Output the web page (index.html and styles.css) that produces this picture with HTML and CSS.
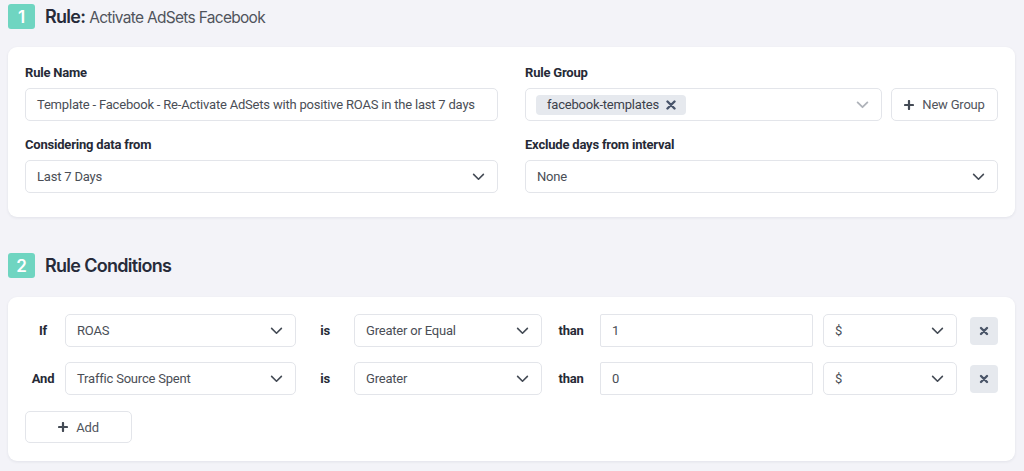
FILE: index.html
```html
<!DOCTYPE html>
<html lang="en">
<head>
<meta charset="utf-8">
<link rel="stylesheet" href="styles.css">
</head>
<body>
<div class="page">
  <div class="section-head">
    <span class="badge">1</span>
    <h2 class="title">Rule: <span class="subtitle">Activate AdSets Facebook</span></h2>
  </div>
  <div class="card card-rule">
    <div class="grid">
      <div class="field">
        <label class="label">Rule Name</label>
        <div class="input">Template - Facebook - Re-Activate AdSets with positive ROAS in the last 7 days</div>
      </div>
      <div class="field">
        <label class="label">Rule Group</label>
        <div class="group-row">
          <div class="input select multi">
            <span class="tag">facebook-templates
              <svg class="tag-x" viewBox="0 0 10 10" width="10" height="10"><path d="M1.5 1.5L8.5 8.5M8.5 1.5L1.5 8.5" stroke="#48546a" stroke-width="2.4" stroke-linecap="round"/></svg>
            </span>
            <svg class="chev light" viewBox="0 0 14 9" width="13" height="8"><path d="M1.5 1.5L7 7l5.5-5.5" fill="none" stroke="#aeb2b9" stroke-width="2" stroke-linecap="round" stroke-linejoin="round"/></svg>
          </div>
          <button class="btn btn-group"><svg viewBox="0 0 10 10" width="10" height="10"><path d="M5 1v8M1 5h8" stroke="#444b55" stroke-width="2.2" stroke-linecap="round"/></svg>New Group</button>
        </div>
      </div>
      <div class="field">
        <label class="label">Considering data from</label>
        <div class="input select">Last 7 Days
          <svg class="chev" viewBox="0 0 14 9" width="13" height="8"><path d="M1.5 1.5L7 7l5.5-5.5" fill="none" stroke="#444b55" stroke-width="1.8" stroke-linecap="round" stroke-linejoin="round"/></svg>
        </div>
      </div>
      <div class="field">
        <label class="label">Exclude days from interval</label>
        <div class="input select">None
          <svg class="chev" viewBox="0 0 14 9" width="13" height="8"><path d="M1.5 1.5L7 7l5.5-5.5" fill="none" stroke="#444b55" stroke-width="1.8" stroke-linecap="round" stroke-linejoin="round"/></svg>
        </div>
      </div>
    </div>
  </div>

  <div class="section-head head2">
    <span class="badge">2</span>
    <h2 class="title">Rule Conditions</h2>
  </div>
  <div class="card card-cond">
    <div class="cond-row">
      <span class="word w-lead">If</span>
      <div class="input select c-metric">ROAS<svg class="chev" viewBox="0 0 14 9" width="13" height="8"><path d="M1.5 1.5L7 7l5.5-5.5" fill="none" stroke="#444b55" stroke-width="1.8" stroke-linecap="round" stroke-linejoin="round"/></svg></div>
      <span class="word w-mid">is</span>
      <div class="input select c-op">Greater or Equal<svg class="chev" viewBox="0 0 14 9" width="13" height="8"><path d="M1.5 1.5L7 7l5.5-5.5" fill="none" stroke="#444b55" stroke-width="1.8" stroke-linecap="round" stroke-linejoin="round"/></svg></div>
      <span class="word w-mid">than</span>
      <div class="input c-val">1</div>
      <div class="input select c-unit">$<svg class="chev" viewBox="0 0 14 9" width="13" height="8"><path d="M1.5 1.5L7 7l5.5-5.5" fill="none" stroke="#444b55" stroke-width="1.8" stroke-linecap="round" stroke-linejoin="round"/></svg></div>
      <button class="btn-x"><svg viewBox="0 0 10 10" width="10" height="10"><path d="M2 2l6 6M8 2L2 8" stroke="#4a5568" stroke-width="2.4" stroke-linecap="round"/></svg></button>
    </div>
    <div class="cond-row">
      <span class="word w-lead">And</span>
      <div class="input select c-metric">Traffic Source Spent<svg class="chev" viewBox="0 0 14 9" width="13" height="8"><path d="M1.5 1.5L7 7l5.5-5.5" fill="none" stroke="#444b55" stroke-width="1.8" stroke-linecap="round" stroke-linejoin="round"/></svg></div>
      <span class="word w-mid">is</span>
      <div class="input select c-op">Greater<svg class="chev" viewBox="0 0 14 9" width="13" height="8"><path d="M1.5 1.5L7 7l5.5-5.5" fill="none" stroke="#444b55" stroke-width="1.8" stroke-linecap="round" stroke-linejoin="round"/></svg></div>
      <span class="word w-mid">than</span>
      <div class="input c-val">0</div>
      <div class="input select c-unit">$<svg class="chev" viewBox="0 0 14 9" width="13" height="8"><path d="M1.5 1.5L7 7l5.5-5.5" fill="none" stroke="#444b55" stroke-width="1.8" stroke-linecap="round" stroke-linejoin="round"/></svg></div>
      <button class="btn-x"><svg viewBox="0 0 10 10" width="10" height="10"><path d="M2 2l6 6M8 2L2 8" stroke="#4a5568" stroke-width="2.4" stroke-linecap="round"/></svg></button>
    </div>
    <button class="btn btn-add"><svg viewBox="0 0 10 10" width="10" height="10"><path d="M5 1v8M1 5h8" stroke="#444b55" stroke-width="2.2" stroke-linecap="round"/></svg>Add</button>
  </div>
</div>
</body>
</html>
```

FILE: styles.css
```css
* { box-sizing: border-box; }
html, body { margin: 0; padding: 0; }
body {
  background: #f3f3f8;
  font-family: Roboto, "Noto Sans", sans-serif;
  color: #2a2e3b;
  letter-spacing: -0.2px;
  width: 1024px;
  height: 471px;
  overflow: hidden;
}
.page { padding: 4px 9px 0 8px; }
.section-head {
  display: flex;
  align-items: center;
  height: 25px;
  gap: 10px;
}
.head2 { margin-top: 36px; }
.badge {
  width: 27px;
  height: 25px;
  background: #6fd5c1;
  color: #fff;
  border-radius: 3px;
  font-family: Inter, sans-serif;
  font-weight: 600;
  font-size: 17px;
  letter-spacing: 0;
  display: flex;
  align-items: center;
  justify-content: center;
}
.title {
  margin: 0;
  font-family: Inter, sans-serif;
  font-size: 18px;
  font-weight: 600;
  color: #272b3a;
  letter-spacing: -0.7px;
}
.subtitle {
  font-weight: 400;
  font-size: 15.5px;
  color: #50545c;
  letter-spacing: -0.7px;
}
.card {
  background: #fff;
  border-radius: 9px;
  box-shadow: 0 1px 3px rgba(30, 35, 60, 0.08);
}
.card-rule {
  margin-top: 18px;
  padding: 18px 17px 24px;
}
.grid {
  display: grid;
  grid-template-columns: 473px 473px;
  column-gap: 27px;
  row-gap: 16px;
}
.label {
  display: block;
  font-size: 13px;
  line-height: 16px;
  font-weight: 700;
  color: #262a36;
  margin-bottom: 7px;
}
.input {
  height: 33px;
  border: 1px solid #e3e5ea;
  border-radius: 5px;
  background: #fff;
  font-size: 13px;
  color: #4a4e56;
  display: flex;
  align-items: center;
  padding: 0 12px 0 11px;
  white-space: nowrap;
}
.select { justify-content: space-between; }
.chev { flex: none; }
.group-row {
  display: flex;
  gap: 9px;
}
.multi { flex: 1; padding-left: 10px; }
.tag {
  display: inline-flex;
  align-items: center;
  gap: 7px;
  height: 20px;
  padding: 0 10px 0 11px;
  background: #e6e9ee;
  border-radius: 4px;
  font-size: 13px;
  color: #3c414b;
}
.btn {
  font-family: inherit;
  letter-spacing: inherit;
  background: #fff;
  border: 1px solid #e3e5ea;
  border-radius: 5px;
  font-size: 13px;
  color: #50545c;
  display: flex;
  align-items: center;
  justify-content: center;
  gap: 8px;
  cursor: pointer;
}
.btn-group { width: 107px; height: 33px; }
.card-cond {
  margin-top: 19px;
  padding: 17px 17px 18px;
}
.cond-row {
  display: flex;
  align-items: center;
  margin-bottom: 15px;
}
.cond-row + .cond-row { margin-bottom: 16px; }
.word {
  font-size: 13px;
  font-weight: 700;
  color: #262a36;
  text-align: center;
  flex: none;
}
.w-lead { width: 36px; margin-right: 4px; }
.w-mid { width: 58px; }
.c-metric { width: 231px; }
.c-op { width: 188px; }
.c-val { width: 213px; border-radius: 2px; }
.c-unit { width: 134px; margin-left: 10px; }
.btn-x {
  width: 28px;
  height: 28px;
  margin-left: 13px;
  border: none;
  border-radius: 4px;
  background: #e6e9ee;
  display: flex;
  align-items: center;
  justify-content: center;
  padding: 0;
}
.btn-add { width: 107px; height: 32px; gap: 8px; }
```
